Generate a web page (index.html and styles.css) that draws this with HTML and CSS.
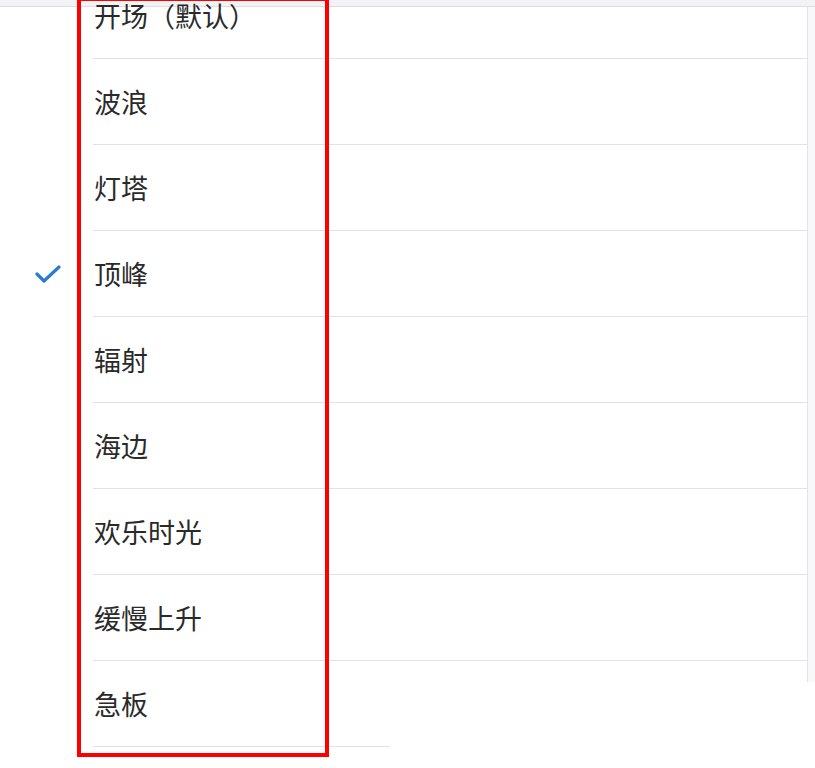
FILE: index.html
```html
<!DOCTYPE html>
<html lang="zh-CN">
<head>
    <meta charset="UTF-8">
    <meta name="viewport" content="width=device-width, initial-scale=1.0">
    <title>铃声</title>
    <link rel="stylesheet" href="styles.css">
</head>
<body>
    <div class="topbar"></div>

    <div class="main">
        <ul class="tone-list">
            <li class="row"><span class="mark"></span><span class="label">开场（默认）</span></li>
            <li class="row"><span class="mark"></span><span class="label">波浪</span></li>
            <li class="row"><span class="mark"></span><span class="label">灯塔</span></li>
            <li class="row selected">
                <span class="mark">
                    <svg width="26" height="20" viewBox="0 0 26 20">
                        <polyline points="2,10 9,17 24,3" fill="none" stroke="#2b7bd2" stroke-width="3.2" stroke-linecap="round" stroke-linejoin="round"/>
                    </svg>
                </span>
                <span class="label">顶峰</span>
            </li>
            <li class="row"><span class="mark"></span><span class="label">辐射</span></li>
            <li class="row"><span class="mark"></span><span class="label">海边</span></li>
            <li class="row"><span class="mark"></span><span class="label">欢乐时光</span></li>
            <li class="row"><span class="mark"></span><span class="label">缓慢上升</span></li>
            <li class="row"><span class="mark"></span><span class="label">急板</span></li>
        </ul>
        <div class="edge"></div>
    </div>

    <!-- annotation box -->
    <div class="highlight"></div>
</body>
</html>
```

FILE: styles.css
```css
body, html {
    margin: 0;
    padding: 0;
    background: #ffffff;
    font-family: "Noto Sans CJK SC", "Noto Sans", sans-serif;
    overflow: hidden;
}

.topbar {
    height: 6px;
    background-color: #f3f3f5;
    border-bottom: 1px solid #dedee0;
}

.main {
    display: flex;
    margin-top: -34px;
}

.tone-list {
    flex: 1;
    list-style: none;
    margin: 0;
    padding: 0;
}

.row {
    display: flex;
    height: 86px;
}

.mark {
    width: 93px;
    flex-shrink: 0;
    display: flex;
    align-items: center;
    padding-left: 35px;
    box-sizing: border-box;
}

.label {
    flex: 1;
    display: flex;
    align-items: center;
    padding-left: 1px;
    border-bottom: 1px solid #e2e2e4;
    font-size: 27px;
    color: #2a2a2a;
}

.row:last-child .label {
    margin-right: 417px;
}

.edge {
    width: 7px;
    height: 675px;
    margin-top: 34px;
    background-color: #f8f8fa;
    border-left: 1px solid #e4e4e6;
}

.highlight {
    position: absolute;
    left: 77px;
    top: -3px;
    width: 244px;
    height: 752px;
    border: 4px solid #ff0000;
}
```
